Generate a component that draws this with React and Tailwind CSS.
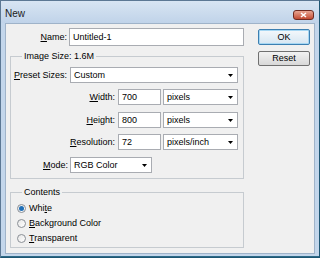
import React from "react";

const Arrow = () => (
  <svg width="5" height="3" viewBox="0 0 5 3" className="shrink-0">
    <path d="M0 0 H5 L2.5 3 Z" fill="#000" />
  </svg>
);

const Select = ({ value, className }) => (
  <div
    className={`h-[16px] flex items-center justify-between bg-white border border-[#a9acb2] pl-[3px] pr-[4px] ${className}`}
  >
    <span>{value}</span>
    <Arrow />
  </div>
);

const TextBox = ({ value, className }) => (
  <div
    className={`h-[16px] flex items-center bg-white border border-[#a9acb2] pl-[3px] ${className}`}
  >
    {value}
  </div>
);

const Label = ({ accel, rest, className }) => (
  <span className={`text-right ${className}`}>
    <span className="underline">{accel}</span>
    {rest}
  </span>
);

const Radio = ({ checked, children }) => (
  <div className="h-[15px] flex items-center gap-[3px]">
    <span className="w-[9px] h-[9px] rounded-full border border-[#8a8f96] bg-gradient-to-br from-[#e6e6e6] to-white flex items-center justify-center">
      {checked && <span className="w-[5px] h-[5px] rounded-full bg-[#1f6fb8]" />}
    </span>
    <span>{children}</span>
  </div>
);

export default function App() {
  return (
    <div
      className="w-[320px] h-[258px] flex flex-col bg-[#c3d6eb] border border-[#5c7894] border-r-[#1e5673] border-b-[#1e5673] text-[9px] leading-[11px] text-black"
      style={{ fontFamily: '"Liberation Sans", Arial, sans-serif' }}
    >
      {/* title bar */}
      <div className="h-[22px] flex items-center justify-between pl-[4px] pr-[5px] bg-gradient-to-b from-[#d8e5f3] to-[#c0d3e9]">
        <span className="text-[10px] text-[#1a1a1a] mt-[3px]">New</span>
        <div className="w-[21px] h-[10px] mt-[5px] rounded-[3px] border border-[#6e2a20] bg-gradient-to-b from-[#e8a592] to-[#c24a32] flex items-center justify-center">
          <svg width="7" height="6" viewBox="0 0 7 6">
            <path d="M1 1 L6 5 M6 1 L1 5" stroke="#fff" strokeWidth="1.6" />
          </svg>
        </div>
      </div>

      {/* body */}
      <div className="flex-1 mx-[4px] mb-[2px] bg-[#f0f0f0] border border-[#9fb3c9] flex">
        {/* left column */}
        <div className="w-[234px] ml-[4px] pt-[4px] flex flex-col">
          <div className="h-[18px] flex items-center">
            <Label accel="N" rest="ame:" className="w-[57px]" />
            <div className="ml-[2px] w-[175px] h-[18px] flex items-center bg-white border border-[#a9acb2] pl-[3px]">
              Untitled-1
            </div>
          </div>

          <fieldset className="mt-[5px] border border-[#c6cbd0] pt-[6px] pb-[5px]">
            <legend className="ml-[11px] px-[2px] leading-[10px]">Image Size: 1.6M</legend>
            <div className="flex items-center h-[16px]">
              <Label accel="P" rest="reset Sizes:" className="w-[56px]" />
              <Select value="Custom" className="ml-[3px] w-[168px]" />
            </div>
            <div className="flex items-center h-[16px] mt-[6px]">
              <Label accel="W" rest="idth:" className="w-[104px]" />
              <TextBox value="700" className="ml-[3px] w-[43px]" />
              <Select value="pixels" className="ml-[2px] w-[75px]" />
            </div>
            <div className="flex items-center h-[16px] mt-[7px]">
              <Label accel="H" rest="eight:" className="w-[104px]" />
              <TextBox value="800" className="ml-[3px] w-[43px]" />
              <Select value="pixels" className="ml-[2px] w-[75px]" />
            </div>
            <div className="flex items-center h-[16px] mt-[6px]">
              <Label accel="R" rest="esolution:" className="w-[104px]" />
              <TextBox value="72" className="ml-[3px] w-[43px]" />
              <Select value="pixels/inch" className="ml-[2px] w-[75px]" />
            </div>
            <div className="flex items-center h-[16px] mt-[7px]">
              <Label accel="M" rest="ode:" className="w-[57px]" />
              <Select value="RGB Color" className="ml-[2px] w-[82px]" />
            </div>
          </fieldset>

          <fieldset className="mt-[8px] border border-[#c6cbd0] pt-[4px] pb-[1px] pl-[6px]">
            <legend className="ml-[5px] px-[2px] leading-[10px]">Contents</legend>
            <Radio checked>
              Whi<span className="underline">t</span>e
            </Radio>
            <Radio>
              <span className="underline">B</span>ackground Color
            </Radio>
            <Radio>
              <span className="underline">T</span>ransparent
            </Radio>
          </fieldset>
        </div>

        {/* right column */}
        <div className="ml-[14px] pt-[5px] flex flex-col w-[52px]">
          <button className="h-[16px] w-full rounded-[2px] border border-[#3c7fb1] bg-gradient-to-b from-[#f4f8fb] to-[#d6e6f2] shadow-[inset_0_0_0_1px_#a6d7f3] leading-[11px]">
            OK
          </button>
          <button className="mt-[6px] h-[15px] w-full rounded-[2px] border border-[#707070] bg-gradient-to-b from-[#f2f2f2] to-[#d8d8d8] leading-[11px]">
            Reset
          </button>
        </div>
      </div>
      <div className="h-[1px] bg-[#2d6a87]" />
    </div>
  );
}
